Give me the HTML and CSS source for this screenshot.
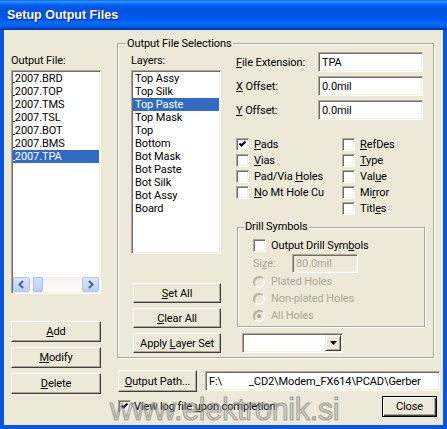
FILE: index.html
```
<!DOCTYPE html>
<html>
<head>
<meta charset="utf-8">
<link rel="stylesheet" href="styles.css">
</head>
<body>
<div class="window">
  <div class="titlebar"><span class="title">Setup Output Files</span></div>
  <div class="frame">
    <div class="leftcol">
      <div class="lbl">Output File:</div>
      <div class="listbox files">
        <div class="items">
          <div class="item"><span>_2007.BRD</span></div>
          <div class="item"><span>_2007.TOP</span></div>
          <div class="item"><span>_2007.TMS</span></div>
          <div class="item"><span>_2007.TSL</span></div>
          <div class="item"><span>_2007.BOT</span></div>
          <div class="item"><span>_2007.BMS</span></div>
          <div class="item sel"><span>_2007.TPA</span></div>
        </div>
        <div class="hscroll">
          <div class="sbtn"><svg width="9" height="9" viewBox="0 0 9 9"><path d="M6 1 L2.5 4.5 L6 8" fill="none" stroke="#4d6185" stroke-width="2"/></svg></div>
          <div class="track"><div class="thumb"></div></div>
          <div class="sbtn"><svg width="9" height="9" viewBox="0 0 9 9"><path d="M3 1 L6.5 4.5 L3 8" fill="none" stroke="#4d6185" stroke-width="2"/></svg></div>
        </div>
      </div>
      <div class="btnstack">
        <div class="btn"><span><u>A</u>dd</span></div>
        <div class="btn"><span><u>M</u>odify</span></div>
        <div class="btn"><span><u>D</u>elete</span></div>
      </div>
    </div>
    <div class="rightcol">
      <div class="group main">
        <div class="legend">Output File Selections</div>
        <div class="layerscol">
          <div class="lbl">Layers:</div>
          <div class="listbox layers">
            <div class="item">Top Assy</div>
            <div class="item">Top Silk</div>
            <div class="item sel">Top Paste</div>
            <div class="item">Top Mask</div>
            <div class="item">Top</div>
            <div class="item">Bottom</div>
            <div class="item">Bot Mask</div>
            <div class="item">Bot Paste</div>
            <div class="item">Bot Silk</div>
            <div class="item">Bot Assy</div>
            <div class="item">Board</div>
          </div>
          <div class="btnstack small">
            <div class="btn"><span><u>S</u>et All</span></div>
            <div class="btn"><span><u>C</u>lear All</span></div>
            <div class="btn"><span>Apply <u>L</u>ayer Set</span></div>
          </div>
        </div>
        <div class="optcol">
          <div class="fields">
            <div class="field"><span class="flbl"><u>F</u>ile Extension:</span><div class="input">TPA</div></div>
            <div class="field"><span class="flbl"><u>X</u> Offset:</span><div class="input">0.0mil</div></div>
            <div class="field"><span class="flbl"><u>Y</u> Offset:</span><div class="input">0.0mil</div></div>
          </div>
          <div class="checks">
            <div class="ccol first">
              <div class="chk"><span class="box"><svg width="9" height="9" viewBox="0 0 9 9"><path d="M1.5 3.5 L3.5 5.5 L7.5 1.5" fill="none" stroke="#000" stroke-width="2"/></svg></span><span><u>P</u>ads</span></div>
              <div class="chk"><span class="box"></span><span><u>V</u>ias</span></div>
              <div class="chk"><span class="box"></span><span>Pad/Via <u>H</u>oles</span></div>
              <div class="chk"><span class="box"></span><span><u>N</u>o Mt Hole Cu</span></div>
            </div>
            <div class="ccol">
              <div class="chk"><span class="box"></span><span><u>R</u>efDes</span></div>
              <div class="chk"><span class="box"></span><span><u>T</u>ype</span></div>
              <div class="chk"><span class="box"></span><span>Val<u>u</u>e</span></div>
              <div class="chk"><span class="box"></span><span>Mi<u>r</u>ror</span></div>
              <div class="chk"><span class="box"></span><span>Titl<u>e</u>s</span></div>
            </div>
          </div>
          <div class="group drill">
            <div class="legend">Drill Symbols</div>
            <div class="chk"><span class="box"></span><span>Output Drill Sym<u>b</u>ols</span></div>
            <div class="sizerow"><span class="sizelbl dis">Si<u>z</u>e:</span><div class="input dis">80.0mil</div></div>
            <div class="radio"><span class="rb"></span><span class="dis">Plated Holes</span></div>
            <div class="radio"><span class="rb"></span><span class="dis">Non-plated Holes</span></div>
            <div class="radio"><span class="rb on"></span><span class="dis">All Holes</span></div>
          </div>
          <div class="combo"><div class="ddbtn"><svg width="7" height="4" viewBox="0 0 7 4"><path d="M0 0 H7 L3.5 4 Z" fill="#000"/></svg></div></div>
        </div>
      </div>
      <div class="pathrow">
        <div class="btn path"><span><u>O</u>utput Path...</span></div>
        <div class="input pathin">F:\<span class="gap"></span>_CD2\Modem_FX614\PCAD\Gerber</div>
      </div>
      <div class="bottomrow">
        <div class="chk view"><span class="box"><svg width="9" height="9" viewBox="0 0 9 9"><path d="M1.5 3.5 L3.5 5.5 L7.5 1.5" fill="none" stroke="#000" stroke-width="2"/></svg></span><span>View log file <u>u</u>pon completion</span></div>
        <div class="btn close"><span>Close</span></div>
      </div>
    </div>
  </div>
  <div class="watermark">www.elektronik.si</div>
</div>
</body>
</html>
```
FILE: styles.css
```
* { box-sizing: border-box; }
html, body { margin: 0; padding: 0; }
body {
  width: 447px; height: 429px; overflow: hidden;
  font-family: Roboto, "Liberation Sans", Arial, sans-serif;
  font-size: 11px; letter-spacing: -0.1px; color: #000;
  background: #ece9d8;
}
u { text-decoration: underline; text-underline-offset: 1px; }
.window { position: relative; width: 447px; height: 429px; display: flex; flex-direction: column; }
.titlebar {
  height: 30px; flex: none; display: flex; align-items: center; padding-left: 7px;
  background: linear-gradient(to bottom, #0058ee 0%, #3593ff 4%, #288eff 7%, #127dff 10%, #036ffc 13%, #0262ee 17%, #0057e5 24%, #0054e3 30%, #0055eb 56%, #005bf5 66%, #026afe 76%, #0062ef 86%, #0052d6 92%, #0040ab 96%, #003092 100%);
}
.title { color: #fff; font-family: "Liberation Sans", Arial, sans-serif; font-weight: bold; font-size: 12.5px; letter-spacing: 0; text-shadow: 1px 1px #0a1f8f; }
.frame {
  flex: 1; display: flex; background: #ece9d8;
  border: 4px solid #0855e4; border-top: 0;
}
.leftcol { width: 90px; margin-left: 7px; padding-top: 24px; display: flex; flex-direction: column; flex: none; }
.lbl { line-height: 13px; height: 13px; white-space: nowrap; }
.listbox {
  background: #fff; border: 1px solid; border-color: #aca899 #fff #fff #aca899;
  box-shadow: inset 1px 1px #716f64, inset -1px -1px #f1efe2; padding: 1px;
}
.files { margin-top: 3px; height: 224px; display: flex; flex-direction: column; }
.items { flex: 1; overflow: hidden; }
.item { height: 13px; line-height: 13px; white-space: nowrap; }
.files .item span { margin-left: -3px; }
.item.sel { background: #316ac5; color: #fff; }
.hscroll { height: 15px; display: flex; flex: none; }
.sbtn {
  width: 17px; height: 15px; flex: none; border: 1px solid #b3c6f2; border-radius: 2px;
  background: linear-gradient(#dce6fd, #bccef6); display: flex; align-items: center; justify-content: center;
}
.track { flex: 1; display: flex; background: linear-gradient(#f3f1ec, #fefefb); }
.thumb {
  margin-left: 3px; width: 10px; height: 15px; border: 1px solid #a9bff0; border-radius: 2px;
  background: linear-gradient(#d3e0fc, #bccef7);
}
.btnstack { display: flex; flex-direction: column; gap: 5px; margin-top: 27px; }
.btn {
  height: 21px; display: flex; align-items: center; justify-content: center; white-space: nowrap;
  background: #ece9d8; border: 1px solid; border-color: #fff #404040 #404040 #fff;
  box-shadow: inset -1px -1px #aca899;
}
.rightcol { width: 323px; margin-left: 16px; display: flex; flex-direction: column; flex: none; }
.group { position: relative; border: 1px solid #aca899; box-shadow: inset 1px 1px #fff, 1px 1px 0 #fff; }
.legend { position: absolute; top: -7px; left: 8px; padding: 0 1px; background: #ece9d8; line-height: 13px; white-space: nowrap; }
.group.main { margin-top: 13px; width: 317px; padding: 8px 9px 4px 13px; display: flex; }
.layerscol { width: 90px; display: flex; flex-direction: column; flex: none; }
.layerscol .lbl { margin-top: 2px; }
.layers { margin-top: 3px; height: 184px; }
.layers .item { padding-left: 2px; }
.btnstack.small { margin-top: 29px; margin-left: 2px; }
.small .btn { height: 20px; }
.optcol { margin-left: 15px; width: 188px; display: flex; flex-direction: column; flex: none; }
.fields { display: flex; flex-direction: column; gap: 4px; }
.field { display: flex; align-items: center; height: 20px; }
.flbl { width: 82px; white-space: nowrap; }
.input {
  width: 105px; height: 20px; background: #fff; border: 1px solid; border-color: #aca899 #fff #fff #aca899;
  box-shadow: inset 1px 1px #716f64, inset -1px -1px #f1efe2; padding-left: 3px;
  display: flex; align-items: center; white-space: nowrap; overflow: hidden;
}
.checks { display: flex; margin-top: 16px; }
.ccol { display: flex; flex-direction: column; }
.ccol.first { width: 106px; flex: none; }
.chk { display: flex; align-items: center; height: 16px; white-space: nowrap; }
.box {
  width: 13px; height: 13px; flex: none; margin-right: 5px; background: #fff;
  border: 1px solid; border-color: #aca899 #fff #fff #aca899;
  box-shadow: inset 1px 1px #716f64, inset -1px -1px #f1efe2;
  display: flex; align-items: center; justify-content: center;
}
.group.drill { margin-top: 11px; margin-left: 1px; width: 188px; padding: 9px 0 2px 15px; }
.drill .legend { top: -8px; left: 6px; }
.sizerow { display: flex; align-items: center; height: 20px; }
.sizelbl { width: 39px; }
.input.dis { width: 66px; height: 19px; background: #ece9d8; color: #aca899; }
.dis { color: #aca899; }
.radio { display: flex; align-items: center; height: 17px; white-space: nowrap; }
.rb {
  width: 12px; height: 12px; flex: none; margin-right: 6px; border-radius: 50%;
  border: 1px solid; border-color: #aca899 #fff #fff #aca899;
  box-shadow: inset 1px 1px #b8b4a6, inset -1px -1px #f1efe2; background: #ece9d8;
  display: flex; align-items: center; justify-content: center;
}
.rb.on::after { content: ""; width: 4px; height: 4px; border-radius: 50%; background: #aca899; }
.combo {
  margin-top: 6px; margin-left: 6px; width: 101px; height: 20px; background: #fff;
  border: 1px solid; border-color: #aca899 #fff #fff #aca899;
  box-shadow: inset 1px 1px #716f64, inset -1px -1px #f1efe2; padding: 1px;
  display: flex; justify-content: flex-end;
}
.ddbtn {
  width: 16px; height: 16px; background: #ece9d8; border: 1px solid; border-color: #f1efe2 #404040 #404040 #f1efe2;
  box-shadow: inset 1px 1px #fff, inset -1px -1px #aca899; display: flex; align-items: center; justify-content: center;
}
.pathrow { margin-top: 12px; display: flex; align-items: center; height: 22px; }
.btn.path { width: 79px; height: 22px; margin-left: 1px; }
.input.pathin { margin-left: 8px; width: 235px; }
.gap { display: inline-block; width: 27px; }
.bottomrow { margin-top: 4px; display: flex; align-items: center; height: 21px; }
.chk.view { margin-left: 1px; }
.view .box { margin-right: 3px; }
.btn.close {
  margin-left: auto; margin-right: 3px; width: 55px; height: 21px; border: 1px solid #000;
  box-shadow: inset 1px 1px #fff, inset -1px -1px #404040, inset -2px -2px #aca899;
}
.watermark {
  position: absolute; left: 110px; top: 394px; line-height: 31px;
  font-family: "Liberation Sans", Arial, sans-serif;
  font-size: 31px; letter-spacing: -0.5px; white-space: nowrap;
  color: rgba(170, 170, 170, 0.45); -webkit-text-stroke: 1px rgba(110, 110, 110, 0.55);
  pointer-events: none;
}
```
